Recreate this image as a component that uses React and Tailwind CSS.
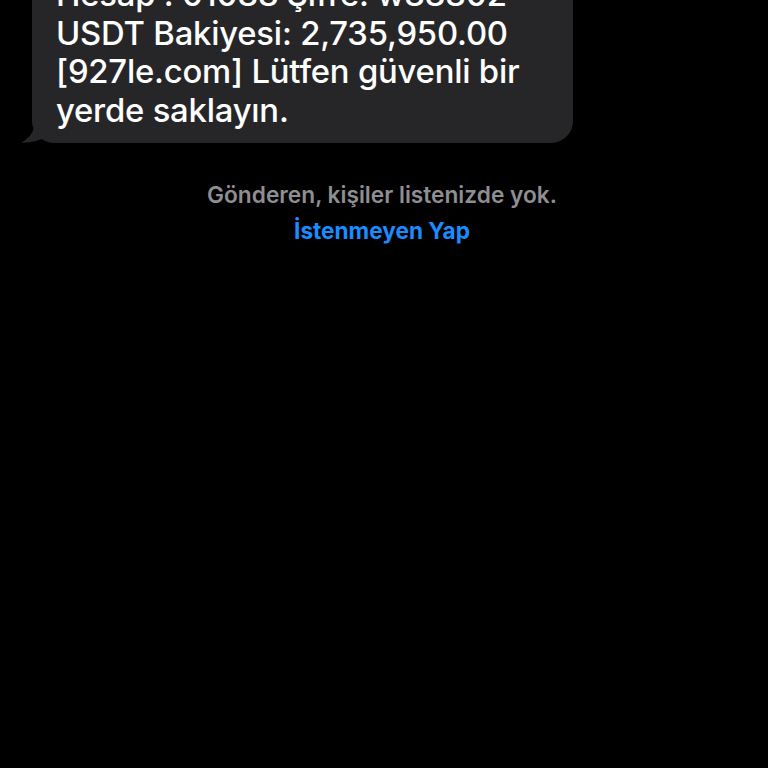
import React from 'react';

export default function App() {
  return (
    <div className="h-[768px] w-full overflow-hidden bg-black" style={{ fontFamily: 'Inter, "Noto Sans", sans-serif' }}>
      {/* Incoming message bubble */}
      <div className="relative -mt-[37px] ml-[32px] w-[541px] rounded-[22px] bg-[#262628] pl-[24px] pr-[16px] pt-[12px] pb-[14px] text-[32.8px] leading-[38.5px] font-medium tracking-[-0.2px] text-white">
        <p>Hesap : 01088 Şifre: w88802</p>
        <p>USDT Bakiyesi: 2,735,950.00</p>
        <p>[927le.com] Lütfen güvenli bir</p>
        <p>yerde saklayın.</p>
        <svg className="absolute -left-[11px] bottom-0" width="30" height="22" viewBox="0 0 30 22">
          <path d="M30 0 L14 0 C14 10 8 18 0 21.5 C8 22 18 20 24 16 C26 18 28 20 30 22 Z" fill="#262628" />
        </svg>
      </div>

      {/* Unknown sender notice */}
      <div className="mt-[39px] flex flex-col items-center pr-[4px]">
        <p className="text-[22.7px] leading-[26px] font-semibold text-[#8e8e93]">Gönderen, kişiler listenizde yok.</p>
        <button className="mt-[10px] text-[22.6px] leading-[26px] font-bold text-[#1a8cff]">İstenmeyen Yap</button>
      </div>
    </div>
  );
}
